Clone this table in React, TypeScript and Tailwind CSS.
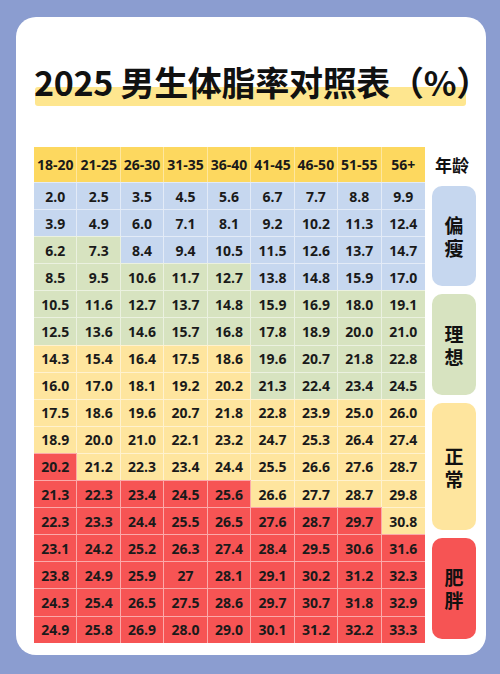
import React from "react";

const rows: string[][] = [
  ["2.0", "2.5", "3.5", "4.5", "5.6", "6.7", "7.7", "8.8", "9.9"],
  ["3.9", "4.9", "6.0", "7.1", "8.1", "9.2", "10.2", "11.3", "12.4"],
  ["6.2", "7.3", "8.4", "9.4", "10.5", "11.5", "12.6", "13.7", "14.7"],
  ["8.5", "9.5", "10.6", "11.7", "12.7", "13.8", "14.8", "15.9", "17.0"],
  ["10.5", "11.6", "12.7", "13.7", "14.8", "15.9", "16.9", "18.0", "19.1"],
  ["12.5", "13.6", "14.6", "15.7", "16.8", "17.8", "18.9", "20.0", "21.0"],
  ["14.3", "15.4", "16.4", "17.5", "18.6", "19.6", "20.7", "21.8", "22.8"],
  ["16.0", "17.0", "18.1", "19.2", "20.2", "21.3", "22.4", "23.4", "24.5"],
  ["17.5", "18.6", "19.6", "20.7", "21.8", "22.8", "23.9", "25.0", "26.0"],
  ["18.9", "20.0", "21.0", "22.1", "23.2", "24.7", "25.3", "26.4", "27.4"],
  ["20.2", "21.2", "22.3", "23.4", "24.4", "25.5", "26.6", "27.6", "28.7"],
  ["21.3", "22.3", "23.4", "24.5", "25.6", "26.6", "27.7", "28.7", "29.8"],
  ["22.3", "23.3", "24.4", "25.5", "26.5", "27.6", "28.7", "29.7", "30.8"],
  ["23.1", "24.2", "25.2", "26.3", "27.4", "28.4", "29.5", "30.6", "31.6"],
  ["23.8", "24.9", "25.9", "27", "28.1", "29.1", "30.2", "31.2", "32.3"],
  ["24.3", "25.4", "26.5", "27.5", "28.6", "29.7", "30.7", "31.8", "32.9"],
  ["24.9", "25.8", "26.9", "28.0", "29.0", "30.1", "31.2", "32.2", "33.3"],
];

const colorMap: string[] = [
  "BBBBBBBBB",
  "BBBBBBBBB",
  "GGBBBBBBB",
  "GGGGGBBBB",
  "GGGGGGGGG",
  "GGGGGGGGG",
  "YYYYYGGGG",
  "YYYYYGGGG",
  "YYYYYYYYY",
  "YYYYYYYYY",
  "RYYYYYYYY",
  "RRRRRYYYY",
  "RRRRRRRRY",
  "RRRRRRRRR",
  "RRRRRRRRR",
  "RRRRRRRRR",
  "RRRRRRRRR",
];

const bg: Record<string, string> = {
  B: "bg-[#c6d7ef]",
  G: "bg-[#d7e3c0]",
  Y: "bg-[#fee59e]",
  R: "bg-[#f65454]",
};

const headers = ["18-20", "21-25", "26-30", "31-35", "36-40", "41-45", "46-50", "51-55", "56+"];

const labels = [
  { text: "偏瘦", rows: 4, cls: "bg-[#c6d7ef]" },
  { text: "理想", rows: 4, cls: "bg-[#d7e3c0]" },
  { text: "正常", rows: 5, cls: "bg-[#fee59e]" },
  { text: "肥胖", rows: 4, cls: "bg-[#f65454]" },
];

const numFont = { fontFamily: '"Open Sans", "Noto Sans", sans-serif' };
const cjkFont = { fontFamily: '"Noto Sans CJK SC", "Noto Sans", sans-serif' };

export default function App() {
  return (
    <div className="w-[500px] h-[674px] bg-[#8b9dd0] pt-[17px] pl-[16px] overflow-hidden">
      <div className="w-[470px] h-[638px] bg-white rounded-[20px] pt-[45px] pl-[18px] pr-[10px]">
        <div className="relative w-[431px] h-[40px]">
          <div className="absolute left-[1px] top-[25px] w-[431px] h-[19px] bg-[#fee68f] rounded-[3px]" />
          <div
            className="relative text-[34px] leading-[40px] font-bold text-[#111] whitespace-nowrap tracking-[-0.3px]"
            style={cjkFont}
          >
            2025 男生体脂率对照表（%）
          </div>
        </div>

        <div className="flex mt-[45px]">
          <div className="w-[391px]" style={numFont}>
            <div className="grid grid-cols-9 h-[35px] bg-[#fdd85f]">
              {headers.map((h, i) => (
                <div
                  key={i}
                  className={`flex items-center justify-center text-[14px] font-bold text-[#1a1a1a] ${i < 8 ? "border-r border-white/40" : ""}`}
                >
                  {h}
                </div>
              ))}
            </div>
            {rows.map((r, ri) => (
              <div key={ri} className="grid grid-cols-9 h-[27.1px]">
                {r.map((v, ci) => (
                  <div
                    key={ci}
                    className={`flex items-center justify-center text-[14px] font-bold text-[#1a1a1a] border-t border-white/50 ${ci < 8 ? "border-r" : ""} ${bg[colorMap[ri][ci]]}`}
                  >
                    {v}
                  </div>
                ))}
              </div>
            ))}
          </div>

          <div className="w-[44px] ml-[7px] flex flex-col" style={cjkFont}>
            <div className="h-[35px] flex items-center justify-center text-[17px] font-bold text-[#111] whitespace-nowrap -ml-[4px]">
              年龄
            </div>
            {labels.map((l, i) => (
              <div
                key={i}
                className="py-[4px] flex"
                style={{ height: `${l.rows * 27.1}px` }}
              >
                <div
                  className={`flex-1 rounded-[10px] flex items-center justify-center ${l.cls}`}
                >
                  <span className="block w-[20px] text-[19px] leading-[23px] font-bold text-[#111] text-center break-all">
                    {l.text}
                  </span>
                </div>
              </div>
            ))}
          </div>
        </div>
      </div>
    </div>
  );
}
